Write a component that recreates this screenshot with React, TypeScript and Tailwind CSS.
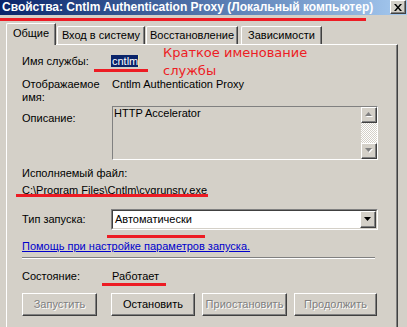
import React from "react";

const raised =
  "bg-[#D4D0C8] border border-t-white border-l-white border-r-[#404040] border-b-[#404040] shadow-[inset_-1px_-1px_0_#808080]";

function Arrow({ dir, disabled }: { dir: "up" | "down"; disabled?: boolean }) {
  const pts = dir === "up" ? "3.5,0 7,4 0,4" : "0,0 7,0 3.5,4";
  return (
    <svg width="9" height="6" viewBox="0 0 9 6" className="block">
      {disabled && <polygon points={pts} transform="translate(1,1)" fill="#ffffff" />}
      <polygon points={pts} fill={disabled ? "#808080" : "#000000"} />
    </svg>
  );
}

function Tab({ label, w, ml, selected }: { label: string; w: string; ml: string; selected?: boolean }) {
  if (selected) {
    return (
      <div
        className={`${w} ${ml} relative z-10 -mb-[1px] h-[22px] bg-[#D4D0C8] border-t border-l border-white rounded-tl-[2px] border-r border-r-[#404040] shadow-[inset_-1px_0_0_#808080] flex justify-center pt-[3px]`}
      >
        {label}
      </div>
    );
  }
  return (
    <div
      className={`${w} ${ml} h-[18px] bg-[#D4D0C8] border-t border-l border-white rounded-tl-[2px] border-r border-r-[#404040] shadow-[inset_-1px_0_0_#808080] flex justify-center pt-[2px]`}
    >
      {label}
    </div>
  );
}

function Btn({ label, w, ml, disabled }: { label: string; w: string; ml: string; disabled?: boolean }) {
  return (
    <div className={`${w} ${ml} h-[23px] ${raised} flex items-center justify-center`}>
      <span className={disabled ? "text-[#808080] [text-shadow:1px_1px_0_#ffffff]" : "text-black"}>{label}</span>
    </div>
  );
}

export default function App() {
  return (
    <div className="relative w-[407px] h-[327px] overflow-hidden bg-[#D4D0C8] text-[11px] leading-[13px] text-black font-['Liberation_Sans',Arial,sans-serif] flex flex-col">
      {/* Title bar */}
      <div className="flex h-[15px] shrink-0 items-start bg-linear-to-r from-[#0A246A] to-[#A6CAF0]">
        <span className="pl-[2px] text-[12px] leading-[14px] font-bold text-white whitespace-nowrap">
          Свойства: Cntlm Authentication Proxy (Локальный компьютер)
        </span>
        <div className={`ml-auto mr-[1px] w-[16px] h-[14px] ${raised} flex items-center justify-center`}>
          <svg width="8" height="7" viewBox="0 0 8 7">
            <path d="M0 0h2l2 2.5L6 0h2L5 3.5 8 7H6L4 4.5 2 7H0l3-3.5z" fill="#000" />
          </svg>
        </div>
      </div>

      <div className="h-[8px] shrink-0" />

      {/* Tabs */}
      <div className="flex items-end h-[21px] shrink-0 pl-[6px]">
        <Tab label="Общие" w="w-[50px]" ml="ml-0" selected />
        <Tab label="Вход в систему" w="w-[88px]" ml="ml-[1px]" />
        <Tab label="Восстановление" w="w-[92px]" ml="ml-[1px]" />
        <Tab label="Зависимости" w="w-[81px]" ml="ml-[3px]" />
      </div>

      {/* Panel */}
      <div className="ml-[6px] w-[392px] flex-1 border-t border-l border-white border-r border-r-[#404040] shadow-[inset_-1px_0_0_#808080] pl-[15px] flex flex-col">
        <div className="mt-[10px] flex">
          <div className="w-[90px]">Имя службы:</div>
          <div>
            <span className="-ml-[1px] pl-[1px] bg-[#0A246A] text-white border-r border-[#E8E8B0]">cntlm</span>
          </div>
        </div>

        <div className="mt-[10px] flex">
          <div className="w-[90px]">
            Отображаемое
            <br />
            имя:
          </div>
          <div>Cntlm Authentication Proxy</div>
        </div>

        <div className="mt-[2px] flex">
          <div className="w-[90px] pt-[6px]">Описание:</div>
          <div className="w-[266px] h-[54px] border border-t-[#808080] border-l-[#808080] border-r-white border-b-white flex">
            <div className="flex-1 pl-[1px]">HTTP Accelerator</div>
            <div className="w-[16px] flex flex-col">
              <div className={`h-[16px] ${raised} flex items-center justify-center`}>
                <Arrow dir="up" disabled />
              </div>
              <div className="flex-1 bg-[image:repeating-conic-gradient(#ffffff_0_25%,#D4D0C8_0_50%)] bg-[length:2px_2px]" />
              <div className={`h-[16px] ${raised} flex items-center justify-center`}>
                <Arrow dir="down" disabled />
              </div>
            </div>
          </div>
        </div>

        <div className="mt-[7px]">Исполняемый файл:</div>
        <div className="mt-[4px]">C:\Program Files\Cntlm\cygrunsrv.exe</div>

        <div className="mt-[12px] flex items-center h-[21px]">
          <div className="w-[89px]">Тип запуска:</div>
          <div className="w-[267px] h-[21px] border border-t-[#808080] border-l-[#808080] border-r-white border-b-white">
            <div className="h-full border border-t-[#404040] border-l-[#404040] border-r-[#D4D0C8] border-b-[#D4D0C8] bg-white flex items-center">
              <span className="flex-1 pl-[2px]">Автоматически</span>
              <div className={`w-[16px] h-[17px] ${raised} flex items-center justify-center`}>
                <Arrow dir="down" />
              </div>
            </div>
          </div>
        </div>

        <div className="mt-[10px]">
          <span className="text-[#0000CC] underline">Помощь при настройке параметров запуска.</span>
        </div>

        <div className="mt-[4px] w-[353px] h-[2px] border-t border-t-[#808080] border-b border-b-white" />

        <div className="mt-[11px] flex">
          <div className="w-[90px]">Состояние:</div>
          <div>Работает</div>
        </div>

        <div className="mt-[10px] flex">
          <Btn label="Запустить" w="w-[75px]" ml="ml-0" disabled />
          <Btn label="Остановить" w="w-[84px]" ml="ml-[14px]" />
          <Btn label="Приостановить" w="w-[85px]" ml="ml-[7px]" disabled />
          <Btn label="Продолжить" w="w-[83px]" ml="ml-[7px]" disabled />
        </div>
      </div>

      {/* Annotations */}
      <div className="absolute left-0 top-[18px] w-[366px] h-[3px] bg-[#ED1C24]" />
      <div className="absolute left-[94px] top-[69px] w-[54px] h-[3px] bg-[#ED1C24]" />
      <div className="absolute left-[16px] top-[194px] w-[192px] h-[3px] bg-[#ED1C24]" />
      <div className="absolute left-[107px] top-[235px] w-[98px] h-[3px] bg-[#ED1C24]" />
      <div className="absolute left-[102px] top-[283px] w-[64px] h-[3px] bg-[#ED1C24]" />
      <div className="absolute left-[163px] top-[44px] text-[13px] leading-[18px] text-[#ED1C24] font-['DejaVu_Sans',sans-serif] whitespace-nowrap">
        Краткое именование
        <br />
        службы
      </div>
    </div>
  );
}
